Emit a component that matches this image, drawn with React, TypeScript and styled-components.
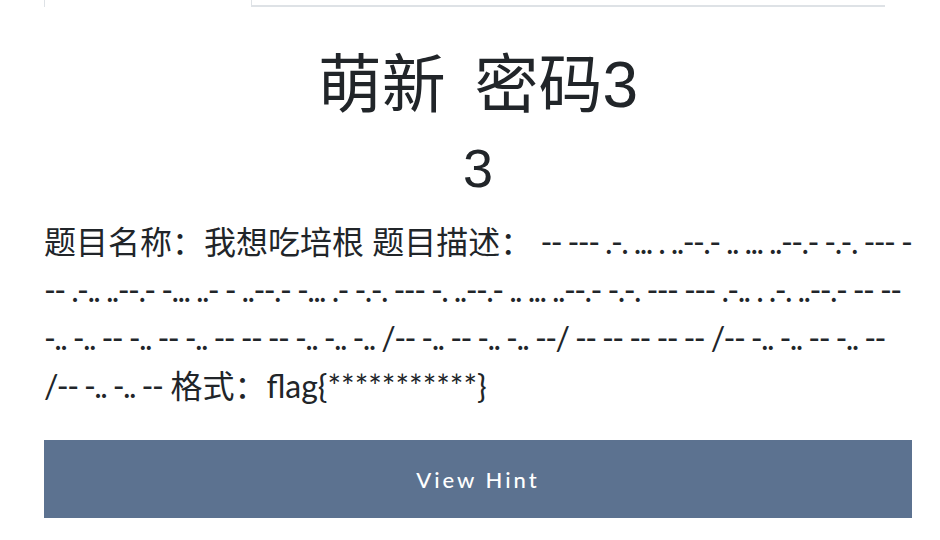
import React from "react";
import styled, { createGlobalStyle } from "styled-components";

const Global = createGlobalStyle`
  html, body { margin: 0; padding: 0; background: #ffffff; }
  body { font-family: Lato, "Noto Sans CJK SC", sans-serif; color: #212529; }
`;

const Page = styled.div`
  padding: 0 28px 0 44px;
  width: 940px;
  box-sizing: border-box;
`;

const Tabs = styled.div`
  display: flex;
  height: 8px;
  margin-top: -1px;
`;

const ActiveTab = styled.div`
  width: 206px;
  border-left: 1px solid #dee2e6;
  border-right: 1px solid #dee2e6;
`;

const TabRest = styled.div`
  width: 633px;
  border-bottom: 2px solid #dee2e6;
`;

const Title = styled.h2`
  margin: 40px 0 0;
  text-align: center;
  font-family: "Liberation Sans", "Noto Sans CJK SC", sans-serif;
  font-weight: 400;
  font-size: 64px;
  line-height: 76px;
  word-spacing: 11px;
  color: #212529;
`;

const Value = styled.h3`
  margin: 13px 0 0;
  text-align: center;
  font-family: "Liberation Sans", "Noto Sans CJK SC", sans-serif;
  font-weight: 400;
  font-size: 54px;
  line-height: 64px;
  color: #212529;
`;

const Description = styled.p`
  margin: 18px 0 0;
  font-family: Lato, "Noto Sans CJK SC", sans-serif;
  font-size: 32px;
  line-height: 48px;
  color: #212529;
`;

const Morse = styled.span`
  letter-spacing: -1.6px;
`;

const HintButton = styled.button`
  display: block;
  width: 100%;
  height: 78px;
  margin-top: 30px;
  border: none;
  background: #5c7290;
  color: #ffffff;
  font-family: Lato, sans-serif;
  font-weight: 500;
  font-size: 22px;
  letter-spacing: 3px;
  cursor: pointer;
`;

const morse =
  "-- --- .-. ... . ..--.- .. ... ..--.- -.-. --- --- .-.. ..--.- -... ..- - ..--.- -... .- -.-. --- -. ..--.- .. ... ..--.- -.-. --- --- .-.. . .-. ..--.- -- -- -.. -.. -- -.. -- -.. -- -- -- -.. -.. -.. /-- -.. -- -.. -.. --/ -- -- -- -- -- /-- -.. -.. -- -.. -- /-- -.. -.. --";

export default function App() {
  return (
    <>
      <Global />
      <Page>
        <Tabs>
          <ActiveTab />
          <TabRest />
        </Tabs>
        <Title>萌新 密码3</Title>
        <Value>3</Value>
        <Description>
          题目名称：我想吃培根 题目描述： <Morse>{morse}</Morse> 格式：flag{"{***********}"}
        </Description>
        <HintButton>View Hint</HintButton>
      </Page>
    </>
  );
}
